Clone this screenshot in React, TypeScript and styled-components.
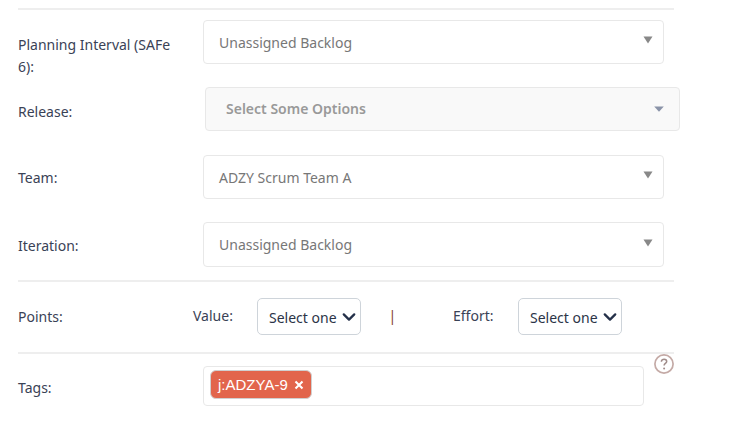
import React from 'react'
import styled, { createGlobalStyle } from 'styled-components'

const chevron =
  "data:image/svg+xml,%3csvg xmlns='http://www.w3.org/2000/svg' viewBox='0 0 16 16'%3e%3cpath fill='none' stroke='%23243049' stroke-linecap='round' stroke-linejoin='round' stroke-width='2.6' d='M2 5l6 6 6-6'/%3e%3c/svg%3e"

const GlobalStyle = createGlobalStyle`
  html, body {
    margin: 0;
    padding: 0;
    background: #fff;
  }
  body {
    font-family: "Noto Sans", "Open Sans", sans-serif;
    font-size: 14px;
    color: #3a4256;
  }
`

const Form = styled.div`
  width: 656px;
  margin-left: 18px;
  padding-top: 8px;
`
const Divider = styled.div<{ $top?: number; $bottom?: number }>`
  height: 2px;
  background: #eeeeee;
  margin-top: ${({ $top }) => $top ?? 0}px;
  margin-bottom: ${({ $bottom }) => $bottom ?? 0}px;
`
const Row = styled.div<{ $gap?: number }>`
  display: flex;
  align-items: flex-start;
  margin-bottom: ${({ $gap }) => $gap ?? 0}px;
`
const Label = styled.label<{ $top?: number }>`
  flex: 0 0 185px;
  box-sizing: border-box;
  padding-right: 14px;
  margin-top: ${({ $top }) => $top ?? 0}px;
  line-height: 22px;
`
const Chosen = styled.div<{ $disabled?: boolean; $tall?: boolean }>`
  display: flex;
  flex: none;
  align-items: center;
  justify-content: space-between;
  box-sizing: border-box;
  height: ${({ $tall }) => ($tall ? 45 : 44)}px;
  width: ${({ $disabled }) => ($disabled ? 475 : 461)}px;
  margin-left: ${({ $disabled }) => ($disabled ? 2 : 0)}px;
  padding: ${({ $disabled }) => ($disabled ? '0 15px 0 20px' : '0 10px 0 15px')};
  border: 1px solid #e8e8e8;
  border-radius: 4px;
  background: ${({ $disabled }) => ($disabled ? '#f9f9f9' : '#fff')};
  color: ${({ $disabled }) => ($disabled ? '#999' : '#777')};
  font-weight: ${({ $disabled }) => ($disabled ? 600 : 400)};
  line-height: 20px;
`
const ChosenText = styled.span<{ $raised?: boolean }>`
  padding-top: ${({ $raised }) => ($raised ? 0 : 2)}px;
`
const Caret = styled.svg`
  display: block;
  flex: none;
  margin-top: -4px;
`
const FlatCaret = styled(Caret)`
  margin-top: 0;
`
const PointsRow = styled.div`
  display: flex;
  align-items: center;
  height: 37px;
`
const PointsLabel = styled.span`
  flex: 0 0 175px;
`
const FieldLabel = styled.span<{ $width: number }>`
  flex: 0 0 ${({ $width }) => $width}px;
  margin-top: -2px;
`
const NativeSelect = styled.select`
  box-sizing: border-box;
  flex: none;
  appearance: none;
  width: 104px;
  height: 37px;
  padding: 2px 0 0 11px;
  border: 1px solid #ced4da;
  border-radius: 5px;
  background: #fff url("${chevron}") no-repeat right 4px center / 14px 14px;
  color: #2b3447;
  font-family: "Noto Sans", "Open Sans", sans-serif;
  font-size: 14px;
`
const Pipe = styled.span`
  flex: 0 0 64.5px;
  margin-left: 27.5px;
  margin-top: -2px;
  color: #8a3b1e;
  line-height: 20px;
`
const TagsRow = styled.div`
  display: flex;
  align-items: flex-start;
  position: relative;
`
const TagsBox = styled.div`
  display: flex;
  align-items: flex-start;
  box-sizing: border-box;
  width: 441px;
  height: 40px;
  margin-top: 12px;
  padding: 3px 6px;
  border: 1px solid #e8e8e8;
  border-radius: 4px;
`
const Tag = styled.span`
  display: inline-flex;
  align-items: center;
  gap: 6px;
  box-sizing: border-box;
  height: 29px;
  padding: 0 7px 0 7px;
  border: 1px solid #d0d0d0;
  border-radius: 6px;
  background: #e2654c;
  color: #fff;
  font-family: "Liberation Sans", Arial, sans-serif;
  font-size: 15px;
`
const TagClose = styled.svg`
  display: block;
`
const Help = styled.svg`
  position: absolute;
  right: 0;
  top: 0;
`

const DropCaret = ({ color }: { color: string }) => (
  <Caret width="10" height="8" viewBox="0 0 10 8">
    <path d="M0.5 0.5h9L5 7.5z" fill={color} />
  </Caret>
)

const App: React.FC = () => {
  return (
    <>
      <GlobalStyle />
      <Form>
        <Divider $bottom={10} />
        <Row $gap={9}>
          <Label $top={14}>Planning Interval (SAFe 6):</Label>
          <Chosen>
            <ChosenText>Unassigned Backlog</ChosenText>
            <DropCaret color="#888" />
          </Chosen>
        </Row>
        <Row $gap={24}>
          <Label $top={14}>Release:</Label>
          <Chosen $disabled>
            <ChosenText $raised>Select Some Options</ChosenText>
            <FlatCaret width="10" height="6" viewBox="0 0 10 6">
              <path d="M0.2 0.5h9.6L5 5.7z" fill="#8a93a8" />
            </FlatCaret>
          </Chosen>
        </Row>
        <Row $gap={23}>
          <Label $top={12}>Team:</Label>
          <Chosen>
            <ChosenText>ADZY Scrum Team A</ChosenText>
            <DropCaret color="#888" />
          </Chosen>
        </Row>
        <Row>
          <Label $top={13}>Iteration:</Label>
          <Chosen $tall>
            <ChosenText $raised>Unassigned Backlog</ChosenText>
            <DropCaret color="#888" />
          </Chosen>
        </Row>
        <Divider $top={13} $bottom={16} />
        <PointsRow>
          <PointsLabel>Points:</PointsLabel>
          <FieldLabel $width={64}>Value:</FieldLabel>
          <NativeSelect defaultValue="">
            <option value="">Select one</option>
          </NativeSelect>
          <Pipe>|</Pipe>
          <FieldLabel $width={65}>Effort:</FieldLabel>
          <NativeSelect defaultValue="">
            <option value="">Select one</option>
          </NativeSelect>
        </PointsRow>
        <Divider $top={17} />
        <TagsRow>
          <Label $top={23}>Tags:</Label>
          <TagsBox>
            <Tag>
              j:ADZYA-9
              <TagClose width="10" height="10" viewBox="0 0 10 10">
                <path d="M1.5 1.5l7 7M8.5 1.5l-7 7" stroke="#fff" strokeWidth="2.1" />
              </TagClose>
            </Tag>
          </TagsBox>
          <Help width="20" height="20" viewBox="0 0 20 20">
            <circle cx="10" cy="10" r="9.1" fill="#fff" stroke="#c4aaa6" strokeWidth="1.7" />
            <path d="M7.4 7.8c0-1.6 1.2-2.6 2.7-2.6s2.6 1 2.6 2.3c0 1.9-2.6 2-2.6 4" fill="none" stroke="#a08c8a" strokeWidth="1.5" />
            <circle cx="10.1" cy="14.4" r="1" fill="#a08c8a" />
          </Help>
        </TagsRow>
      </Form>
    </>
  )
}

export default App
